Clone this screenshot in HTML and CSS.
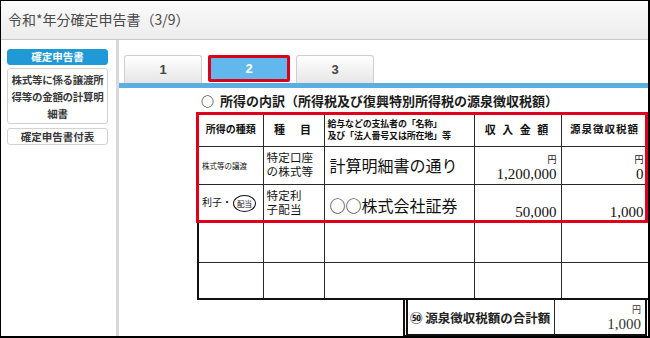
FILE: index.html
```html
<!DOCTYPE html>
<html lang="ja">
<head>
    <meta charset="UTF-8">
    <meta name="viewport" content="width=device-width, initial-scale=1.0">
    <title>令和*年分確定申告書</title>
    <link rel="stylesheet" href="styles.css">
</head>
<body>

    <div class="screen">
        <!-- Title bar -->
        <header class="titlebar">令和*年分確定申告書（3/9）</header>

        <div class="main">
            <!-- Left menu -->
            <nav class="side">
                <div class="side-item active">確定申告書</div>
                <div class="side-item">株式等に係る譲渡所得等の金額の計算明細書</div>
                <div class="side-item">確定申告書付表</div>
            </nav>

            <!-- Form area -->
            <section class="content">
                <div class="tabs">
                    <div class="tab">1</div>
                    <div class="tab current">2</div>
                    <div class="tab">3</div>
                </div>

                <div class="sheet">
                    <h2 class="sheet-title"><span class="mark">○</span>所得の内訳（所得税及び復興特別所得税の源泉徴収税額）</h2>

                    <div class="grid-wrap">
                        <table class="grid">
                            <colgroup>
                                <col class="c1"><col class="c2"><col class="c3"><col class="c4"><col class="c5">
                            </colgroup>
                            <tr class="head">
                                <th>所得の種類</th>
                                <th class="spaced">種　目</th>
                                <th class="payer"><span>給与などの支払者の「名称」</span><span>及び「法人番号又は所在地」等</span></th>
                                <th class="spaced">収 入 金 額</th>
                                <th class="tax-head">源泉徴収税額</th>
                            </tr>
                            <tr class="r1">
                                <td class="kind tiny">株式等の譲渡</td>
                                <td class="item"><span>特定口座</span><span>の株式等</span></td>
                                <td class="name">計算明細書の通り</td>
                                <td class="amount"><span class="yen">円</span><span class="num">1,200,000</span></td>
                                <td class="amount"><span class="yen">円</span><span class="num">0</span></td>
                            </tr>
                            <tr class="r2">
                                <td class="kind">利子・<span class="circled">配当</span></td>
                                <td class="item"><span>特定利</span><span>子配当</span></td>
                                <td class="name">○○株式会社証券</td>
                                <td class="amount"><span class="num">50,000</span></td>
                                <td class="amount"><span class="num">1,000</span></td>
                            </tr>
                            <tr class="r3">
                                <td></td><td></td><td></td><td></td><td></td>
                            </tr>
                            <tr class="r4">
                                <td></td><td></td><td></td><td></td><td></td>
                            </tr>
                        </table>
                        <div class="highlight"></div>
                    </div>

                    <div class="total">
                        <div class="total-label">㊿ 源泉徴収税額の合計額</div>
                        <div class="amount total-amount"><span class="yen">円</span><span class="num">1,000</span></div>
                    </div>
                </div>
            </section>
        </div>
    </div>

</body>
</html>
```

FILE: styles.css
```css
body {
    margin: 0;
    padding: 0;
    background-color: #ffffff;
    font-family: "Noto Sans CJK JP", "Liberation Sans", sans-serif;
    color: #333333;
}

.screen {
    width: 650px;
    height: 338px;
    box-sizing: border-box;
    border: 1px solid #000000;
    border-right-width: 2px;
    border-bottom-width: 2px;
    display: flex;
    flex-direction: column;
    overflow: hidden;
}

.titlebar {
    height: 38px;
    line-height: 36px;
    padding-left: 7px;
    font-size: 14px;
    color: #4a4a4a;
    background: linear-gradient(#fbfbfb, #ececec);
    border-bottom: 1px solid #c9c9c9;
    flex-shrink: 0;
}

.main {
    flex: 1;
    display: flex;
    min-height: 0;
}

/* Left menu */
.side {
    width: 109px;
    padding: 9px 0 0 6px;
    border-right: 3px solid #d9d9d9;
    flex-shrink: 0;
}

.side-item {
    width: 101px;
    box-sizing: border-box;
    border: 1px solid #d2d2d2;
    border-radius: 3px;
    background-color: #ffffff;
    font-size: 10.5px;
    font-weight: bold;
    color: #3a3a3a;
    text-align: center;
    line-height: 17px;
    margin-bottom: 3px;
}

.side-item.active {
    height: 16px;
    line-height: 14px;
    background-color: #1f9ad6;
    border-color: #1f9ad6;
    color: #ffffff;
}

.side-item:nth-child(2) {
    height: 56px;
    padding-top: 2px;
    margin-bottom: 4px;
    letter-spacing: -0.3px;
}

.side-item:nth-child(3) {
    height: 17px;
    line-height: 15px;
}

/* Form area */
.content {
    flex: 1;
    display: flex;
    flex-direction: column;
}

.tabs {
    display: flex;
    gap: 6px;
    padding: 15px 0 0 5px;
    border-bottom: 5px solid #5aaee0;
}

.tab {
    width: 78px;
    height: 28px;
    box-sizing: border-box;
    border: 1px solid #cfcfcf;
    border-bottom: none;
    border-radius: 3px 3px 0 0;
    background: linear-gradient(#ffffff, #e6e6e6);
    font-family: "Liberation Sans", sans-serif;
    font-weight: bold;
    font-size: 13px;
    color: #444444;
    text-align: center;
    line-height: 27px;
}

.tab.current {
    width: 82px;
    height: 27px;
    border: 3px solid #d8001c;
    border-radius: 2px;
    background: #62b7ec;
    color: #ffffff;
    line-height: 21px;
}

.sheet {
    padding: 0 1px 0 78px;
}

.sheet-title {
    margin: 0;
    height: 25px;
    line-height: 26px;
    padding-left: 4px;
    font-size: 13px;
    font-weight: bold;
    color: #1a1a1a;
    white-space: nowrap;
}

.sheet-title .mark {
    margin-right: 6px;
}

.grid-wrap {
    position: relative;
    width: 450px;
}

.grid {
    width: 450px;
    border-collapse: collapse;
    table-layout: fixed;
    color: #111111;
}

.grid .c1 { width: 65px; }
.grid .c2 { width: 61px; }
.grid .c3 { width: 150px; }
.grid .c4 { width: 87px; }
.grid .c5 { width: 87px; }

.grid th,
.grid td {
    border: 1.5px solid #2a2a2a;
    padding: 0;
    overflow: hidden;
    white-space: nowrap;
}

.grid tr:first-child th { border-top: none; }
.grid th:first-child,
.grid td:first-child { border-left: 2px solid #111111; }
.grid tr:last-child td { border-bottom: 2px solid #111111; }

.grid .head { height: 33px; }
.grid .r1 { height: 38px; }
.grid .r2 { height: 38px; }
.grid .r3 { height: 40px; }
.grid .r4 { height: 37px; }

.grid th {
    font-size: 10px;
    font-weight: bold;
    line-height: 12px;
    text-align: center;
}

.grid th.spaced {
    font-size: 11px;
    letter-spacing: 2px;
}

.grid th.payer {
    font-size: 9px;
    letter-spacing: -0.2px;
    text-align: left;
    padding-left: 3px;
}

.grid th.payer span,
.item span {
    display: block;
}

.grid th.payer span {
    height: 12px;
    line-height: 13px;
}

.grid th.tax-head {
    font-size: 10.5px;
    letter-spacing: 1px;
}

.kind {
    font-size: 10px;
    padding-left: 3px !important;
}

.kind.tiny {
    font-size: 7.5px;
}

.circled {
    display: inline-block;
    border: 1.5px solid #111111;
    border-radius: 50%;
    font-size: 7.5px;
    line-height: 11px;
    padding: 2px 3px;
    margin-left: 1px;
    vertical-align: middle;
}

.item {
    font-size: 11.5px;
    letter-spacing: 0.2px;
    padding-left: 3px !important;
    vertical-align: top;
    padding-top: 3px !important;
}

.item span {
    height: 14px;
    line-height: 14px;
}

.name {
    font-size: 16px;
    padding-left: 5px !important;
}

.r2 .name {
    padding-top: 4px !important;
}

.amount {
    text-align: right;
    padding-right: 4px !important;
    vertical-align: bottom;
}

.yen {
    display: block;
    font-size: 9px;
    line-height: 10px;
}

.num {
    display: block;
    font-family: "Liberation Serif", serif;
    font-size: 15px;
    line-height: 18px;
    padding-bottom: 1px;
}

.highlight {
    position: absolute;
    top: -1px;
    left: -1px;
    width: 452px;
    height: 111px;
    box-sizing: border-box;
    border: 3px solid #e0001b;
    pointer-events: none;
}

/* Total row */
.total {
    display: flex;
    width: 244px;
    height: 36px;
    margin-left: auto;
    box-sizing: border-box;
    border-left: 5px double #111111;
    border-right: 2px solid #111111;
    border-bottom: 2px solid #111111;
}

.total-label {
    flex: 1;
    font-size: 12.5px;
    font-weight: bold;
    color: #222222;
    padding-left: 2px;
    line-height: 36px;
    white-space: nowrap;
    border-right: 1.5px solid #2a2a2a;
}

.total-amount {
    width: 86px;
    display: flex;
    flex-direction: column;
    justify-content: flex-end;
    padding-right: 2px;
}
```
